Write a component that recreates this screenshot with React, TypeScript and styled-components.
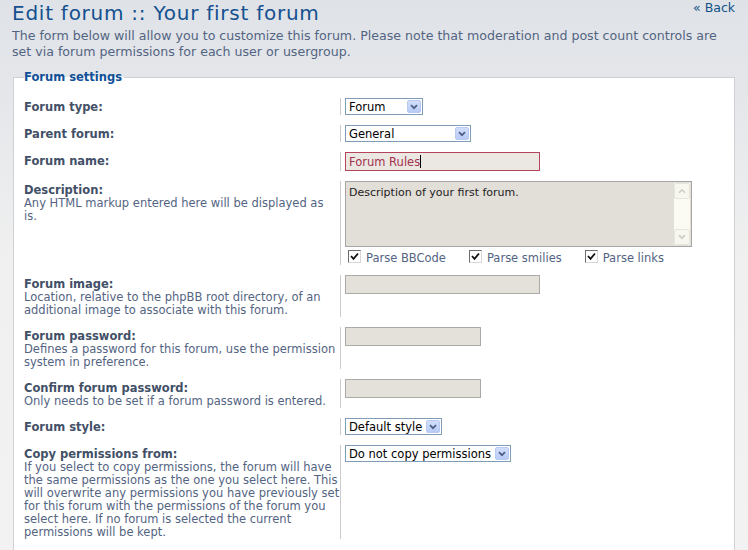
import React from "react";
import styled, { createGlobalStyle } from "styled-components";

const GlobalStyle = createGlobalStyle`
  html, body { margin: 0; padding: 0; }
  body {
    background: linear-gradient(to bottom, #dfe2e7 0px, #e6e8eb 120px, #f0f0f0 260px, #f2f2f2 100%);
    font-family: "DejaVu Sans", Verdana, sans-serif;
    height: 550px;
    overflow: hidden;
  }
`;

const Page = styled.div`
  padding: 0 13px 0 12px;
`;

const Header = styled.div`
  display: flex;
  justify-content: space-between;
  align-items: flex-start;
`;

const Title = styled.h1`
  margin: 0;
  padding-top: 1px;
  font-size: 20px;
  letter-spacing: 0.75px;
  line-height: 24px;
  font-weight: normal;
  color: #14508f;
`;

const BackLink = styled.a`
  font-size: 12.5px;
  line-height: 15px;
  color: #105289;
  text-decoration: none;
  margin-right: 0;
`;

const Intro = styled.p`
  margin: 3px 0 0;
  font-size: 12.6px;
  line-height: 16px;
  color: #536482;
`;

const Fieldset = styled.fieldset`
  margin: 10px 0 0 1px;
  padding: 14px 10px 20px 10px;
  border: 1px solid #cfd1d4;
  background: #ffffff;
  min-width: 0;
`;

const Legend = styled.legend`
  padding: 0 2px 0 0;
  font-size: 11.5px;
  font-weight: bold;
  color: #115098;
`;

const Row = styled.dl`
  display: flex;
  margin: 0 0 10px;
`;

const Term = styled.dt`
  width: 316px;
  flex-shrink: 0;
  border-right: 1px solid #cccccc;
  padding-top: 3px;
  font-size: 11.5px;
  line-height: 13px;
  color: #536482;
`;

const LabelText = styled.label`
  display: block;
  font-weight: bold;
  color: #425067;
`;

const Explain = styled.span`
  display: block;
  color: #536482;
`;

const Def = styled.dd`
  margin: 0 0 0 4px;
  display: flex;
  flex-direction: column;
  align-items: flex-start;
`;

const SelectBox = styled.div<{ $w: number }>`
  display: flex;
  align-items: center;
  justify-content: space-between;
  box-sizing: border-box;
  width: ${(p) => p.$w}px;
  height: 17px;
  border: 1px solid #7f9db9;
  background: #ffffff;
  padding: 0 1px 0 3px;
  font-size: 11.5px;
  color: #000000;
`;

const SelectButton = styled.span`
  display: flex;
  align-items: center;
  justify-content: center;
  width: 14px;
  height: 13px;
  border-radius: 2px;
  background: linear-gradient(to bottom, #d2defb, #b8cbf6);
  border: 1px solid #b9c9ef;
  box-sizing: border-box;
`;

const TextInput = styled.div<{ $w: number; $focus?: boolean }>`
  box-sizing: border-box;
  width: ${(p) => p.$w}px;
  height: 19px;
  border: 1px solid ${(p) => (p.$focus ? "#b3445c" : "#acaaa6")};
  background: ${(p) => (p.$focus ? "#ebe7e3" : "#e4e0da")};
  padding: 0 3px;
  font-size: 11.5px;
  color: #a3324c;
  display: flex;
  align-items: center;
`;

const Caret = styled.span`
  display: inline-block;
  width: 1px;
  height: 13px;
  background: #000;
`;

const TextArea = styled.div`
  box-sizing: border-box;
  width: 347px;
  height: 66px;
  border: 1px solid #a6a6a6;
  background: #e2ded8;
  display: flex;
  justify-content: space-between;
`;

const AreaText = styled.div`
  padding: 4px 3px;
  font-size: 11px;
  line-height: 13px;
  color: #222;
`;

const ScrollTrack = styled.div`
  width: 16px;
  margin: 1px 1px 1px 0;
  background: #fbfbf3;
  display: flex;
  flex-direction: column;
  justify-content: space-between;
`;

const ScrollBtn = styled.span`
  box-sizing: border-box;
  height: 16px;
  border: 1px solid #e6e6dc;
  border-radius: 2px;
  background: #f7f7f0;
  display: flex;
  align-items: center;
  justify-content: center;
`;

const CheckRow = styled.div`
  display: flex;
  gap: 23px;
  margin-top: 4px;
  padding-left: 3px;
`;

const CheckItem = styled.span`
  display: inline-flex;
  align-items: center;
  gap: 5px;
  font-size: 11.5px;
  color: #536482;
`;

const CheckBox = styled.span`
  box-sizing: border-box;
  width: 13px;
  height: 13px;
  border: 1px solid;
  border-color: #6d6d6d #d8d8d8 #d8d8d8 #6d6d6d;
  background: #ffffff;
  display: inline-flex;
  align-items: center;
  justify-content: center;
  position: relative;
  top: -2px;
`;

const Chevron = ({ color = "#4d6185" }: { color?: string }) => (
  <svg width="8" height="6" viewBox="0 0 8 6">
    <path d="M1 1.2 L4 4.2 L7 1.2" fill="none" stroke={color} strokeWidth="1.8" />
  </svg>
);

const Select = ({ w, value }: { w: number; value: string }) => (
  <SelectBox $w={w}>
    <span>{value}</span>
    <SelectButton>
      <Chevron />
    </SelectButton>
  </SelectBox>
);

const Check = ({ label }: { label: string }) => (
  <CheckItem>
    <CheckBox>
      <svg width="9" height="9" viewBox="0 0 9 9">
        <path d="M1 4 L3.5 6.8 L8 1.5" fill="none" stroke="#111" strokeWidth="1.8" />
      </svg>
    </CheckBox>
    {label}
  </CheckItem>
);

export default function App() {
  return (
    <>
      <GlobalStyle />
      <Page>
        <Header>
          <Title>Edit forum :: Your first forum</Title>
          <BackLink href="#">« Back</BackLink>
        </Header>
        <Intro>
          The form below will allow you to customize this forum. Please note that moderation and post count controls are
          set via forum permissions for each user or usergroup.
        </Intro>
        <Fieldset>
          <Legend>Forum settings</Legend>
          <Row>
            <Term>
              <LabelText>Forum type:</LabelText>
            </Term>
            <Def>
              <Select w={78} value="Forum" />
            </Def>
          </Row>
          <Row>
            <Term>
              <LabelText>Parent forum:</LabelText>
            </Term>
            <Def>
              <Select w={126} value="General" />
            </Def>
          </Row>
          <Row>
            <Term>
              <LabelText>Forum name:</LabelText>
            </Term>
            <Def>
              <TextInput $w={195} $focus>
                Forum Rules
                <Caret />
              </TextInput>
            </Def>
          </Row>
          <Row>
            <Term>
              <LabelText>Description:</LabelText>
              <Explain>
                Any HTML markup entered here will be displayed as
                <br />
                is.
              </Explain>
            </Term>
            <Def>
              <TextArea>
                <AreaText>Description of your first forum.</AreaText>
                <ScrollTrack>
                  <ScrollBtn>
                    <svg width="8" height="6" viewBox="0 0 8 6">
                      <path d="M1 4.8 L4 1.8 L7 4.8" fill="none" stroke="#cfcfc6" strokeWidth="1.6" />
                    </svg>
                  </ScrollBtn>
                  <ScrollBtn>
                    <Chevron color="#cfcfc6" />
                  </ScrollBtn>
                </ScrollTrack>
              </TextArea>
              <CheckRow>
                <Check label="Parse BBCode" />
                <Check label="Parse smilies" />
                <Check label="Parse links" />
              </CheckRow>
            </Def>
          </Row>
          <Row>
            <Term>
              <LabelText>Forum image:</LabelText>
              <Explain>Location, relative to the phpBB root directory, of an additional image to associate with this forum.</Explain>
            </Term>
            <Def>
              <TextInput $w={195} />
            </Def>
          </Row>
          <Row>
            <Term>
              <LabelText>Forum password:</LabelText>
              <Explain>Defines a password for this forum, use the permission system in preference.</Explain>
            </Term>
            <Def>
              <TextInput $w={136} />
            </Def>
          </Row>
          <Row>
            <Term>
              <LabelText>Confirm forum password:</LabelText>
              <Explain>Only needs to be set if a forum password is entered.</Explain>
            </Term>
            <Def>
              <TextInput $w={136} />
            </Def>
          </Row>
          <Row>
            <Term>
              <LabelText>Forum style:</LabelText>
            </Term>
            <Def>
              <Select w={97} value="Default style" />
            </Def>
          </Row>
          <Row>
            <Term>
              <LabelText>Copy permissions from:</LabelText>
              <Explain>
                If you select to copy permissions, the forum will have the same permissions as the one you select here. This
                will overwrite any permissions you have previously set for this forum with the permissions of the forum you
                select here. If no forum is selected the current permissions will be kept.
              </Explain>
            </Term>
            <Def>
              <Select w={166} value="Do not copy permissions" />
            </Def>
          </Row>
        </Fieldset>
      </Page>
    </>
  );
}
